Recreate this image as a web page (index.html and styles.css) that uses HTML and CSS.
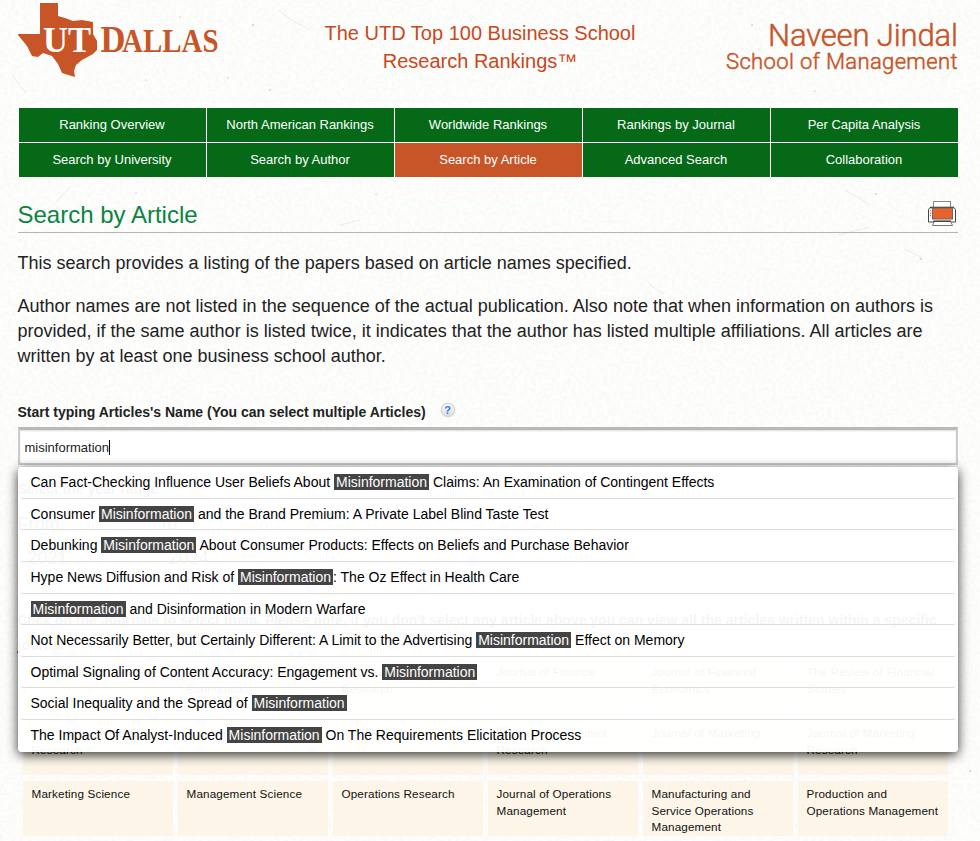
FILE: index.html
```html
<!DOCTYPE html>
<html lang="en">
<head>
<meta charset="utf-8">
<title>Search by Article</title>
<link rel="stylesheet" href="styles.css">
</head>
<body>
<svg class="paper" width="980" height="841" aria-hidden="true">
  <filter id="grain" x="0" y="0" width="100%" height="100%" color-interpolation-filters="sRGB">
    <feTurbulence type="fractalNoise" baseFrequency="0.25" numOctaves="3" seed="4"/>
    <feColorMatrix values="0 0 0 0 0.5  0 0 0 0 0.49  0 0 0 0 0.46  0.1 0 0 0 -0.036"/>
  </filter>
  <rect width="980" height="841" filter="url(#grain)"/>
  <g fill="none" stroke="#e9e7e4" stroke-width=".8">
    <path d="M278 10l16 12 12 5M845 190l25 15M870 227l-32 8M905 249l17 9M70 187l-14 15M340 225l20-5M650 285l14 9M12 75l14 18M960 65l-18 14"/>
  </g>
  <g fill="#cfcdca">
    <circle cx="180" cy="17" r=".8"/><circle cx="253" cy="25" r=".9"/><circle cx="228" cy="78" r=".8"/><circle cx="270" cy="90" r=".9"/><circle cx="146" cy="80" r=".8"/><circle cx="752" cy="25" r=".9"/><circle cx="815" cy="91" r=".8"/><circle cx="876" cy="194" r=".9"/><circle cx="921" cy="259" r=".9"/><circle cx="136" cy="193" r=".8"/><circle cx="376" cy="194" r=".8"/><circle cx="970" cy="771" r=".9"/>
  </g>
</svg>
<div class="page">
  <header class="header">
    <svg class="logo" width="204" height="80" viewBox="0 0 204 80">
      <path fill="#c75528" d="M22 3h18v13l7 2 8 3 9-1 11 2v12l4 7v9l-4 4-11 6-6 5-2 6 1 6-13-4-4-9-6-8-9-3-5 4-6-1-5-10L0 35v-1h22z"/>
      <g font-family="Liberation Serif, serif" font-weight="bold">
        <text x="25" y="52" font-size="36" fill="#fff" textLength="48" lengthAdjust="spacingAndGlyphs">UT</text>
        <text x="82.500" y="52" font-size="37" fill="#c75528" textLength="25" lengthAdjust="spacingAndGlyphs">D</text>
        <text x="104" y="52" font-size="33" fill="#c75528" textLength="96.500" lengthAdjust="spacingAndGlyphs">ALLAS</text>
      </g>
    </svg>
    <h1 class="title">The UTD Top 100 Business School<br>Research Rankings™</h1>
    <svg class="school" width="236" height="80" viewBox="0 0 236 80">
      <g font-family="Roboto, sans-serif" font-weight="300" fill="#c75528" stroke="#c75528" stroke-width=".5">
        <text x="46" y="45.500" font-size="31" textLength="190">Naveen Jindal</text>
        <text x="4" y="69" font-size="22" textLength="231.500">School of Management</text>
      </g>
    </svg>
  </header>

  <nav class="nav">
    <a>Ranking Overview</a><a>North American Rankings</a><a>Worldwide Rankings</a><a>Rankings by Journal</a><a>Per Capita Analysis</a>
    <a>Search by University</a><a>Search by Author</a><a class="active">Search by Article</a><a>Advanced Search</a><a>Collaboration</a>
  </nav>

  <div class="heading">
    <h2>Search by Article</h2>
    <svg class="printer" width="30" height="28" viewBox="0 0 30 28">
      <rect x="6.500" y="1.500" width="17" height="6" fill="#fff" stroke="#888"/>
      <path d="M3 7.500h24l1.500 2v12.500h-27v-12.500z" fill="#fff" stroke="#444"/>
      <path d="M3 7.500h24" stroke="#444" stroke-width="1.600"/>
      <rect x="5.500" y="8" width="20" height="11" fill="#e8622c" stroke="#666"/>
      <path d="M3.500 10v1.200M3.500 12.500v1.200M3.500 15v1.200" stroke="#e8622c"/>
      <path d="M7.500 21h16l2 4.500h-20z" fill="#fff" stroke="#777"/>
      <path d="M6 21.300h18" stroke="#444" stroke-width="1.300"/>
    </svg>
  </div>

  <p class="text">This search provides a listing of the papers based on article names specified.</p>
  <p class="text">Author names are not listed in the sequence of the actual publication. Also note that when information on authors is provided, if the same author is listed twice, it indicates that the author has listed multiple affiliations. All articles are written by at least one business school author.</p>

  <div class="label">Start typing Articles's Name (You can select multiple Articles)<span class="help">?</span></div>
  <div class="field">
    <div class="input"><span>misinformation</span><i class="caret"></i></div>
    <ul class="menu">
      <li>Can Fact-Checking Influence User Beliefs About <mark>Misinformation</mark> Claims: An Examination of Contingent Effects</li>
      <li>Consumer <mark>Misinformation</mark> and the Brand Premium: A Private Label Blind Taste Test</li>
      <li>Debunking <mark>Misinformation</mark> About Consumer Products: Effects on Beliefs and Purchase Behavior</li>
      <li>Hype News Diffusion and Risk of <mark>Misinformation</mark>: The Oz Effect in Health Care</li>
      <li><mark>Misinformation</mark> and Disinformation in Modern Warfare</li>
      <li>Not Necessarily Better, but Certainly Different: A Limit to the Advertising <mark>Misinformation</mark> Effect on Memory</li>
      <li>Optimal Signaling of Content Accuracy: Engagement vs. <mark>Misinformation</mark></li>
      <li>Social Inequality and the Spread of <mark>Misinformation</mark></li>
      <li>The Impact Of Analyst-Induced <mark>Misinformation</mark> On The Requirements Elicitation Process</li>
    </ul>
  </div>

  <div class="label years-label">Select the year range</div>
  <div class="years">
    <div><span>From</span><b>2021</b></div>
    <div><span>To</span><b>2024</b></div>
  </div>
  <p class="note">Click on the Journals to select them. Please note, if you don't select any article above you can view all the articles written within a specific journal</p>

  <div class="journals">
    <div>The Accounting Review</div><div>Journal of Accounting and Economics</div><div>Journal of Accounting Research</div><div>Journal of Finance</div><div>Journal of Financial Economics</div><div>The Review of Financial Studies</div>
    <div>Information Systems Research</div><div>Journal on Computing</div><div>MIS Quarterly</div><div>Journal of Consumer Research</div><div>Journal of Marketing</div><div>Journal of Marketing Research</div>
    <div>Marketing Science</div><div>Management Science</div><div>Operations Research</div><div>Journal of Operations Management</div><div>Manufacturing and Service Operations Management</div><div>Production and Operations Management</div>
  </div>
</div>
</body>
</html>
```
FILE: styles.css
```css
* { box-sizing: border-box; }
body {
  margin: 0;
  height: 841px;
  overflow: hidden;
  background: #fefefd;
  color: #222;
  font-family: "Liberation Sans", Arial, sans-serif;
}
.paper { position: absolute; left: 0; top: 0; z-index: -1; }
.page { width: 940px; margin-left: 17.5px; }

.header { display: flex; height: 108px; }
.logo { flex: none; overflow: visible; }
.title {
  flex: 1;
  margin: 19px -17px 0 0;
  text-align: center;
  font-size: 20px;
  line-height: 28px;
  font-weight: normal;
  color: #c8491d;
}
.school { flex: none; width: 236px; overflow: visible; }

.nav {
  display: grid;
  grid-template-columns: repeat(5, 187px);
  grid-auto-rows: 34px;
  gap: 1px;
  margin-left: 1px;
  width: 939px;
  background: #fff;
}
.nav a {
  background: #056917;
  color: #fff;
  font-size: 13px;
  line-height: 34px;
  text-align: center;
}
.nav .active { background: #c75528; }

.heading {
  display: flex;
  justify-content: space-between;
  height: 56px;
  padding-top: 22px;
  border-bottom: 1px solid #b5b5b5;
}
.heading h2 {
  margin: 0;
  font-size: 24px;
  line-height: 32px;
  font-weight: normal;
  color: #0b8442;
}
.printer { margin: 1px .5px 0 0; }

.text { margin: 18px 0; font-size: 18px; line-height: 25px; }
.text + .text { margin-top: 0; margin-bottom: 33px; }

.label {
  display: flex;
  align-items: center;
  height: 20px;
  font-size: 14px;
  font-weight: bold;
}
.help {
  width: 14px;
  height: 14px;
  margin: -4px 0 0 15px;
  border: 1px solid #d0d0d0;
  border-radius: 50%;
  background: linear-gradient(#fff, #ddd);
  box-shadow: 0 0 1px #aaa;
  color: #2878e8;
  font: bold 11px/12px "Liberation Sans", sans-serif;
  text-align: center;
}

.field { position: relative; height: 38px; margin-top: 5px; }
.input {
  display: flex;
  align-items: center;
  height: 38px;
  padding: 2px 5px 0;
  border: 2px solid #ccc;
  border-top: 3px solid #b8b8b8;
  background: #fff;
  box-shadow: inset 0 1px 2px #ddd;
  font-size: 13px;
}
.caret { width: 1px; height: 15px; background: #000; }

.menu {
  position: absolute;
  left: 0;
  top: 40px;
  z-index: 2;
  width: 940px;
  height: 285px;
  margin: 0;
  padding: .3px 2px 0;
  list-style: none;
  border-radius: 4px;
  background: rgba(255, 255, 255, .955);
  box-shadow: 0 3px 12px rgba(0, 0, 0, .8);
  color: #000;
  font-size: 14px;
}
.menu li {
  height: 31.58px;
  padding-left: 11px;
  border-bottom: 1px solid #ddd;
  border-radius: 3px;
  line-height: 31px;
  white-space: nowrap;
}
.menu li:last-child { border-bottom: 0; }
.menu mark { padding: 0 2px; background: #444; color: #fff; }

.years-label { margin-top: 14px; }
.years { display: flex; gap: 10px; height: 80px; padding-top: 14px; font-size: 18px; }
.years div { width: 131px; }
.years span, .years b { display: block; line-height: 22px; font-weight: normal; }
.years b { margin-top: 12px; padding-left: 10px; }
.note { margin: 29px 0 1px; font-size: 14px; line-height: 25px; font-weight: bold; height: 50px; }

.journals {
  display: grid;
  grid-template-columns: repeat(6, 150px);
  grid-auto-rows: 55px;
  gap: 6px 5px;
  padding-left: 5.5px;
}
.journals div {
  padding: 5px 3px 0 8.5px;
  background: #fdf5e8;
  color: #111;
  font-size: 11.7px;
  letter-spacing: .14px;
  line-height: 16.5px;
}
```
